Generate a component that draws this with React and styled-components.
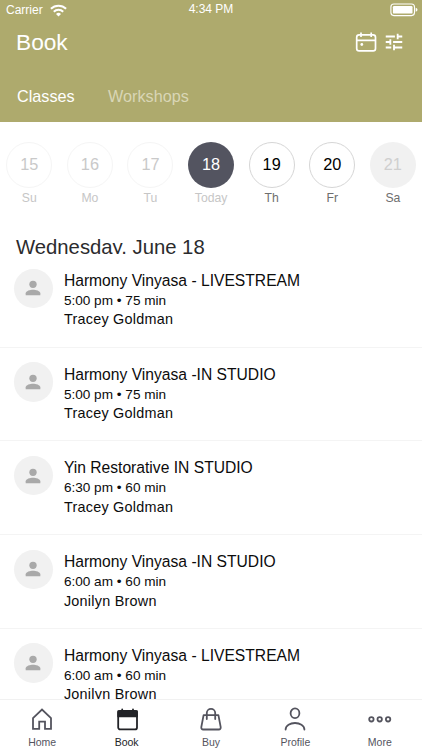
import React from "react";
import styled, { createGlobalStyle } from "styled-components";

const GlobalStyle = createGlobalStyle`
  * {
    box-sizing: border-box;
  }

  body {
    margin: 0;
    overflow: hidden;
    font-family: "Liberation Sans", Arial, sans-serif;
  }
`;

const Screen = styled.div`
  display: flex;
  flex-direction: column;
  width: 422px;
  height: 750px;
  background: #fff;
  overflow: hidden;
  white-space: nowrap;
`;

const Header = styled.header`
  flex: none;
  height: 122px;
  background: #aeaa6d;
  color: #fff;
`;

const StatusBar = styled.div`
  display: grid;
  grid-template-columns: 1fr auto 1fr;
  align-items: center;
  height: 20px;
  padding: 0 4px 0 6px;
  font-size: 12px;
  line-height: 20px;
`;

const Carrier = styled.div`
  display: flex;
  align-items: center;
  gap: 7px;
`;

const Clock = styled.div`
  padding-bottom: 2px;
  margin-left: -2px;
  line-height: 18px;
`;

const Battery = styled.svg`
  justify-self: end;
`;

const TitleBar = styled.div`
  display: flex;
  align-items: center;
  justify-content: space-between;
  height: 44px;
  padding: 0 17.5px 0 16px;
`;

const Title = styled.h1`
  margin: 0;
  font-size: 22.7px;
  font-weight: 400;
  line-height: 44px;
`;

const Actions = styled.div`
  display: flex;
  align-items: center;
  gap: 6px;
`;

const Tabs = styled.div`
  display: flex;
  gap: 33.5px;
  padding: 21px 17px 0;
`;

const Tab = styled.div`
  color: ${(props) => (props.$active ? "#fff" : "#d9d6b6")};
  font-size: 16.2px;
  line-height: 22px;
`;

const Week = styled.div`
  flex: none;
  display: grid;
  grid-template-columns: repeat(7, 60.6px);
  width: 424px;
  height: 114px;
  padding-top: 19.5px;
  margin-left: -1px;
`;

const Day = styled.div`
  display: flex;
  flex-direction: column;
  align-items: center;
`;

const circles = {
  past: "color: #c9c9c9; border: 1px solid #f5f5f5;",
  today: "color: #fff; background: #535460;",
  open: "color: #000; border: 1px solid #d6d6d6;",
  closed: "color: #cfcfcf; background: #f1f1f1;",
};

const Circle = styled.div`
  width: 46px;
  height: 46px;
  border-radius: 50%;
  display: flex;
  align-items: center;
  justify-content: center;
  font-size: 16.3px;
  ${(props) => circles[props.$state]}
`;

const DayName = styled.div`
  margin-top: 3px;
  font-size: 12.2px;
  line-height: 15px;
  color: ${(props) => (props.$muted ? "#c6c6c6" : "#6e6e6e")};
`;

const DateHeading = styled.h2`
  flex: none;
  height: 18px;
  margin: 0;
  padding-left: 16px;
  overflow: hidden;
  color: #2b2b2d;
  font-size: 20.3px;
  font-weight: 400;
  line-height: 23px;
`;

const ClassList = styled.div`
  flex: 1;
  min-height: 0;
  overflow: hidden;
`;

const ClassRow = styled.div`
  display: flex;
  align-items: flex-start;
  gap: 11px;
  height: 93.7px;
  padding: 14.6px 0 0 13.5px;
  border-bottom: 1px solid #f4f4f4;
`;

const Avatar = styled.div`
  flex: none;
  display: flex;
  align-items: center;
  justify-content: center;
  width: 39.4px;
  height: 39.4px;
  border-radius: 50%;
  background: #f1f1f1;
`;

const Info = styled.div`
  padding-top: 1.4px;
  color: #0c0c0c;
`;

const ClassName = styled.div`
  font-size: 15.65px;
  line-height: 22px;
`;

const Time = styled.div`
  font-size: 13.6px;
  line-height: 18.5px;
`;

const Teacher = styled.div`
  font-size: 14.4px;
  line-height: 18.2px;
  letter-spacing: 0.25px;
`;

const TabBar = styled.nav`
  flex: none;
  display: grid;
  grid-template-columns: repeat(5, 1fr);
  height: 51px;
  background: #fff;
  border-top: 1px solid #f1f1f1;
`;

const NavItem = styled.div`
  display: flex;
  flex-direction: column;
  align-items: center;
  padding-top: 7px;
  color: ${(props) => (props.$active ? "#222327" : "#54545e")};
  font-size: 10.5px;
  line-height: 14px;
`;

const NavIcon = styled.svg`
  display: block;
  margin-bottom: 4px;
  fill: none;
  stroke: currentColor;
  stroke-width: 1.8;
  stroke-linejoin: round;
  stroke-linecap: round;
`;

const days = [
  { date: 15, name: "Su", state: "past" },
  { date: 16, name: "Mo", state: "past" },
  { date: 17, name: "Tu", state: "past" },
  { date: 18, name: "Today", state: "today" },
  { date: 19, name: "Th", state: "open" },
  { date: 20, name: "Fr", state: "open" },
  { date: 21, name: "Sa", state: "closed" },
];

const classes = [
  { name: "Harmony Vinyasa - LIVESTREAM", time: "5:00 pm • 75 min", teacher: "Tracey Goldman" },
  { name: "Harmony Vinyasa -IN STUDIO", time: "5:00 pm • 75 min", teacher: "Tracey Goldman" },
  { name: "Yin Restorative IN STUDIO", time: "6:30 pm • 60 min", teacher: "Tracey Goldman" },
  { name: "Harmony Vinyasa -IN STUDIO", time: "6:00 am • 60 min", teacher: "Jonilyn Brown" },
  { name: "Harmony Vinyasa - LIVESTREAM", time: "6:00 am • 60 min", teacher: "Jonilyn Brown" },
];

const navItems = [
  {
    label: "Home",
    icon: <path d="M3 11.2 12 2.600l9 8.600V21.900h-6v-7.300H9.200v7.300H3z" strokeLinejoin="miter" />,
  },
  {
    label: "Book",
    active: true,
    icon: (
      <>
        <rect x="3.2" y="3.800" width="18.800" height="18.600" rx="2" />
        <path d="M3.200 4.200H22v5.200H3.200z" fill="currentColor" />
        <path d="M7.200 2.400v3M18 2.400v3" />
      </>
    ),
  },
  {
    label: "Buy",
    icon: (
      <>
        <path d="M4.600 8.200h14.800l2.300 12q.1 2.300-1.900 2.300H4.200q-2 0-1.900-2.300z" />
        <path d="M7.800 12V6a4.200 4.200 0 0 1 8.400 0V12" />
      </>
    ),
  },
  {
    label: "Profile",
    icon: (
      <>
        <ellipse cx="12" cy="6.300" rx="4.400" ry="4.900" />
        <path d="M2.600 22.600c0-8.800 18.800-8.800 18.800 0" />
      </>
    ),
  },
  {
    label: "More",
    icon: (
      <>
        <circle cx="3.4" cy="12.300" r="2.200" />
        <circle cx="11.700" cy="12.300" r="2.200" />
        <circle cx="20.100" cy="12.300" r="2.200" />
      </>
    ),
  },
];

const WifiIcon = () => (
  <svg width="17" height="13" viewBox="0 0 17 13" fill="none" stroke="#fff" strokeWidth="2">
    <path d="M.9 4.8a10.8 10.8 0 0 1 15.2 0" />
    <path d="M3.8 7.8a6.7 6.7 0 0 1 9.4 0" />
    <path d="M8.5 12.4 6 9.9a3.6 3.6 0 0 1 5 0z" fill="#fff" stroke="none" />
  </svg>
);

const BatteryIcon = () => (
  <Battery width="28" height="14" viewBox="0 0 28 14">
    <rect x=".9" y="1" width="23.6" height="11.6" rx="3" fill="none" stroke="#fff" strokeWidth="1.1" />
    <rect x="2.9" y="3" width="19.6" height="7.6" rx="1.2" fill="#fff" />
    <path d="M25.7 4.8q1.8.7 1.8 2t-1.8 2z" fill="#fff" />
  </Battery>
);

const CalendarIcon = () => (
  <svg width="22" height="22" viewBox="0 0 22 22" fill="none" stroke="#fff" strokeWidth="1.7">
    <rect x="1.7" y="3.8" width="18.8" height="16" rx="2.4" />
    <path d="M1.7 9.3h18.8M6 1.600v4.400M16.200 1.600v4.400" />
    <circle cx="6.8" cy="13.5" r="1.4" fill="#fff" stroke="none" />
  </svg>
);

const TuneIcon = () => (
  <svg width="22" height="22" viewBox="0 0 24 24" fill="#fff">
    <path d="M3 17v2h6v-2H3zM3 5v2h10V5H3zm10 16v-2h8v-2h-8v-2h-2v6h2zM7 9v2H3v2h4v2h2V9H7zm14 4v-2H11v2h10zm-6-4h2V7h4V5h-4V3h-2v6z" />
  </svg>
);

const PersonIcon = () => (
  <svg width="22" height="22" viewBox="0 0 24 24" fill="#a9a9a9">
    <circle cx="12" cy="8" r="4" />
    <path d="M4 20v-2.2C4 15 9 13.8 12 13.8s8 1.2 8 4V20z" />
  </svg>
);

const App = () => {
  return (
    <Screen>
      <GlobalStyle />

      <Header>
        <StatusBar>
          <Carrier>
            Carrier
            <WifiIcon />
          </Carrier>
          <Clock>4:34 PM</Clock>
          <BatteryIcon />
        </StatusBar>

        <TitleBar>
          <Title>Book</Title>
          <Actions>
            <CalendarIcon />
            <TuneIcon />
          </Actions>
        </TitleBar>

        <Tabs>
          <Tab $active>Classes</Tab>
          <Tab>Workshops</Tab>
        </Tabs>
      </Header>

      <Week>
        {days.map((day) => (
          <Day key={day.date}>
            <Circle $state={day.state}>{day.date}</Circle>
            <DayName $muted={day.state === "past" || day.state === "today"}>{day.name}</DayName>
          </Day>
        ))}
      </Week>

      <DateHeading>Wednesday, June 18</DateHeading>

      <ClassList>
        {classes.map((item, index) => (
          <ClassRow key={index}>
            <Avatar>
              <PersonIcon />
            </Avatar>
            <Info>
              <ClassName>{item.name}</ClassName>
              <Time>{item.time}</Time>
              <Teacher>{item.teacher}</Teacher>
            </Info>
          </ClassRow>
        ))}
      </ClassList>

      <TabBar>
        {navItems.map((item) => (
          <NavItem key={item.label} $active={item.active}>
            <NavIcon width="24" height="24" viewBox="0 0 24 24">
              {item.icon}
            </NavIcon>
            {item.label}
          </NavItem>
        ))}
      </TabBar>
    </Screen>
  );
};

export default App;
